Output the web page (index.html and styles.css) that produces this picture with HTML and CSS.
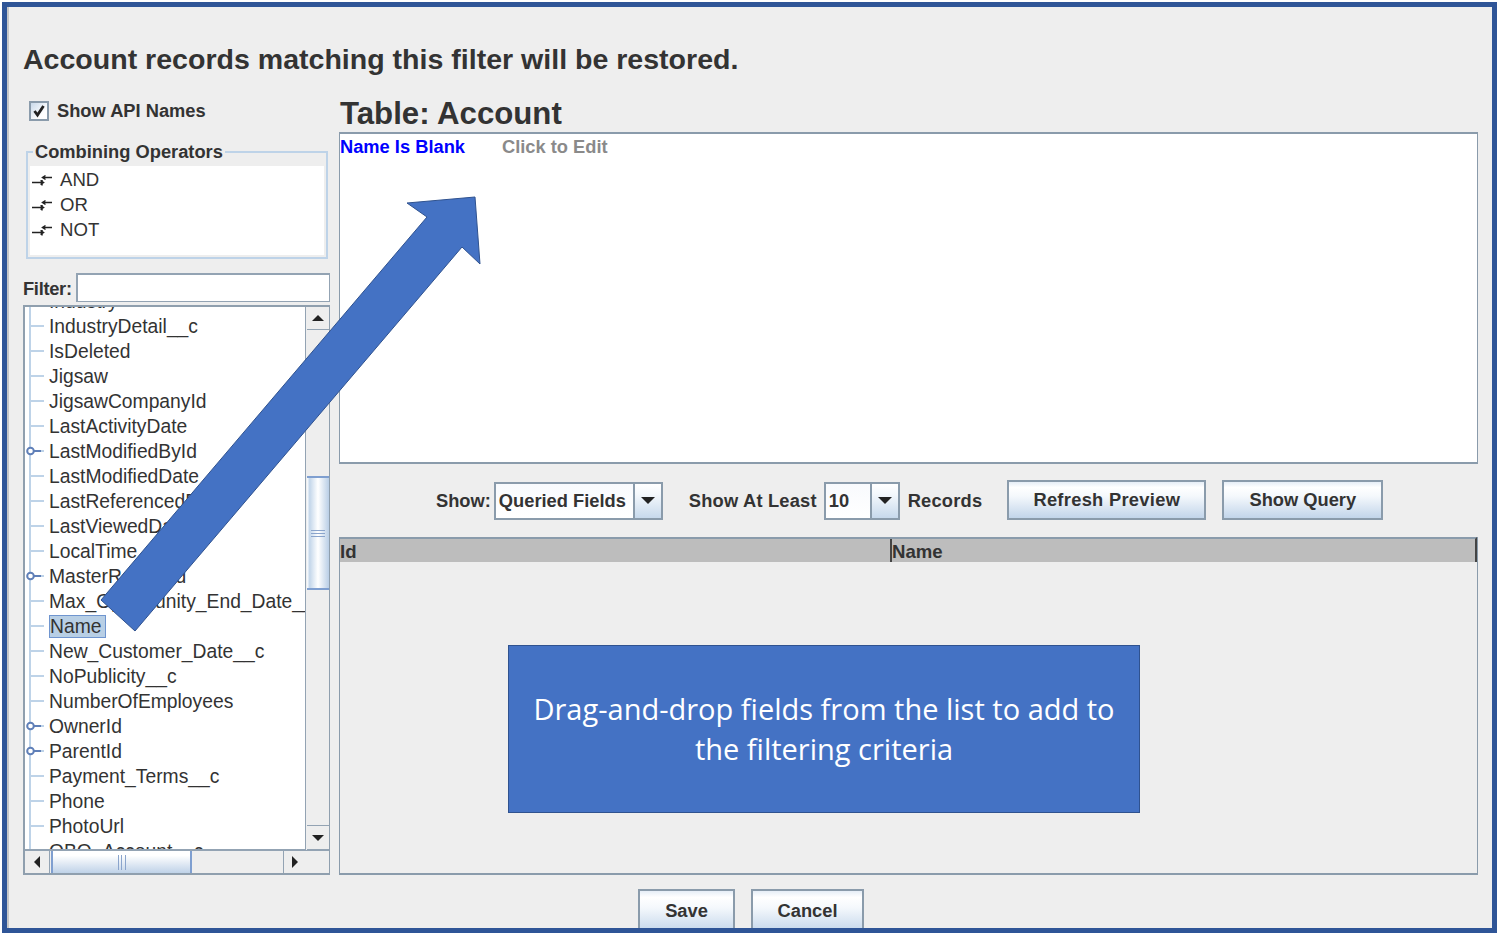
FILE: index.html
```html
<!DOCTYPE html>
<html lang="en">
<head>
<meta charset="utf-8">
<title>Account filter</title>
<link rel="stylesheet" href="styles.css">
</head>
<body>
<div class="frame">
  <div class="inner">
    <h1 class="heading">Account records matching this filter will be restored.</h1>
    <div class="columns">
      <div class="left">
        <label class="check-row"><span class="checkbox"><svg width="16" height="16" viewBox="0 0 16 16"><path d="M3.5 8 L6.5 12 L12.5 3" fill="none" stroke="#222" stroke-width="2.8"/></svg></span><span class="bold-label">Show API Names</span></label>
        <div class="group">
          <span class="legend">Combining Operators</span>
          <div class="ops">
            <div class="op"><svg class="op-icon" width="20" height="14" viewBox="0 0 20 14"><path d="M0 9.5H11M8.5 7.5L11.5 9.5L8.5 11.5M10 7V12.5M20 4.5H11M13.5 2.5L10.5 4.5L13.5 6.5" fill="none" stroke="#222" stroke-width="1.5"/></svg>AND</div>
            <div class="op"><svg class="op-icon" width="20" height="14" viewBox="0 0 20 14"><path d="M0 9.5H11M8.5 7.5L11.5 9.5L8.5 11.5M10 7V12.5M20 4.5H11M13.5 2.5L10.5 4.5L13.5 6.5" fill="none" stroke="#222" stroke-width="1.5"/></svg>OR</div>
            <div class="op"><svg class="op-icon" width="20" height="14" viewBox="0 0 20 14"><path d="M0 9.5H11M8.5 7.5L11.5 9.5L8.5 11.5M10 7V12.5M20 4.5H11M13.5 2.5L10.5 4.5L13.5 6.5" fill="none" stroke="#222" stroke-width="1.5"/></svg>NOT</div>
          </div>
        </div>
        <div class="filter-row"><span class="bold-label filter-label">Filter:</span><div class="filter-input"></div></div>
        <div class="tree">
          <div class="list">
            <div class="rows">
              <div class="row">Industry</div>
              <div class="row">IndustryDetail__c</div>
              <div class="row">IsDeleted</div>
              <div class="row">Jigsaw</div>
              <div class="row">JigsawCompanyId</div>
              <div class="row">LastActivityDate</div>
              <div class="row key"><svg class="key-icon" width="24" height="12" viewBox="0 0 24 12"><circle cx="5.5" cy="5" r="3.3" fill="#fff" stroke="#5f7fb8" stroke-width="2"/><path d="M9 5H16" stroke="#5f7fb8" stroke-width="2"/></svg>LastModifiedById</div>
              <div class="row">LastModifiedDate</div>
              <div class="row">LastReferencedDate</div>
              <div class="row">LastViewedDate</div>
              <div class="row">LocalTime__c</div>
              <div class="row key"><svg class="key-icon" width="24" height="12" viewBox="0 0 24 12"><circle cx="5.5" cy="5" r="3.3" fill="#fff" stroke="#5f7fb8" stroke-width="2"/><path d="M9 5H16" stroke="#5f7fb8" stroke-width="2"/></svg>MasterRecordId</div>
              <div class="row">Max_Opportunity_End_Date__c</div>
              <div class="row"><span class="selected">Name</span></div>
              <div class="row">New_Customer_Date__c</div>
              <div class="row">NoPublicity__c</div>
              <div class="row">NumberOfEmployees</div>
              <div class="row key"><svg class="key-icon" width="24" height="12" viewBox="0 0 24 12"><circle cx="5.5" cy="5" r="3.3" fill="#fff" stroke="#5f7fb8" stroke-width="2"/><path d="M9 5H16" stroke="#5f7fb8" stroke-width="2"/></svg>OwnerId</div>
              <div class="row key"><svg class="key-icon" width="24" height="12" viewBox="0 0 24 12"><circle cx="5.5" cy="5" r="3.3" fill="#fff" stroke="#5f7fb8" stroke-width="2"/><path d="M9 5H16" stroke="#5f7fb8" stroke-width="2"/></svg>ParentId</div>
              <div class="row">Payment_Terms__c</div>
              <div class="row">Phone</div>
              <div class="row">PhotoUrl</div>
              <div class="row">QBO_Account__c</div>
            </div>
          </div>
          <div class="vscroll">
            <div class="sb-btn sb-v-btn"><i class="tri tri-up"></i></div>
            <div class="v-track"><div class="v-thumb"><i class="grip-v"></i></div></div>
            <div class="sb-btn sb-v-btn"><i class="tri tri-down"></i></div>
          </div>
          <div class="hscroll">
            <div class="sb-btn sb-h-btn"><i class="tri tri-left"></i></div>
            <div class="h-track"><div class="h-thumb"><i class="grip-h"></i></div></div>
            <div class="sb-btn sb-h-btn"><i class="tri tri-right"></i></div>
          </div>
          <div class="corner"></div>
        </div>
      </div>
      <div class="right">
        <h2 class="table-title">Table: Account</h2>
        <div class="editor"><span class="criteria">Name Is Blank</span><span class="edit-link">Click to Edit</span></div>
        <div class="toolbar">
          <span class="bold-label">Show:</span>
          <div class="combo combo-fields"><span class="combo-value">Queried Fields</span><span class="combo-btn"><i class="tri tri-down"></i></span></div>
          <span class="bold-label at-least">Show At Least</span>
          <div class="combo combo-count"><span class="combo-value">10</span><span class="combo-btn"><i class="tri tri-down"></i></span></div>
          <span class="bold-label records">Records</span>
          <div class="btn btn-refresh">Refresh Preview</div>
          <div class="btn btn-query">Show Query</div>
        </div>
        <div class="results">
          <div class="results-head"><div class="col col-id">Id</div><div class="col col-name">Name</div></div>
        </div>
      </div>
    </div>
    <div class="footer">
      <div class="btn btn-save">Save</div>
      <div class="btn btn-cancel">Cancel</div>
    </div>
  </div>
</div>
<svg class="arrow" width="1498" height="935" viewBox="0 0 1498 935"><polygon points="475,197 480,264 462,247 135,631 101,600 427,217 407,203" fill="#4472c4" stroke="#2f528f" stroke-width="1"/></svg>
<div class="callout">Drag-and-drop fields from the list to add to the filtering criteria</div>
</body>
</html>
```
FILE: styles.css
```css
* { box-sizing: border-box; }
html, body { margin: 0; padding: 0; }
body {
  position: relative;
  width: 1498px;
  height: 935px;
  overflow: hidden;
  background: #fff;
  font-family: "Liberation Sans", Arial, sans-serif;
  color: #333;
}
.frame {
  margin: 2px 0 0 2px;
  width: 1495px;
  height: 931px;
  border: 5px solid #2f5597;
  background: #eee;
}
.inner {
  height: 100%;
  display: flex;
  flex-direction: column;
  overflow: hidden;
  border-left: 2px solid #c6c6c6;
  padding-left: 14px;
}
.heading {
  margin: 36px 0 0;
  height: 32px;
  font-size: 28.55px;
  line-height: 32px;
  font-weight: 700;
  white-space: nowrap;
}
.columns { display: flex; margin-top: 22px; height: 778px; flex: none; }
.left { width: 307px; flex: none; display: flex; flex-direction: column; }
.right { width: 1139px; flex: none; margin-left: 9px; display: flex; flex-direction: column; }
.bold-label { font-size: 18.3px; font-weight: 700; white-space: nowrap; }
.check-row { height: 28px; display: flex; align-items: center; padding-left: 6px; flex: none; }
.checkbox {
  width: 20px; height: 20px; margin-right: 8px;
  border: 2px solid #8a9bab;
  background: linear-gradient(135deg, #c9d9ea, #fff 70%);
  display: flex; align-items: center; justify-content: center;
}
.group {
  position: relative;
  flex: none;
  margin: 26px 0 0 3px;
  width: 302px; height: 108px;
  border: 2px solid #bed3e8;
  padding: 13px 2px 2px;
}
.legend {
  position: absolute; left: 5px; top: -12px;
  padding: 0 2px;
  background: #eee;
  font-size: 18.3px; font-weight: 700; line-height: 22px; white-space: nowrap;
}
.ops { height: 89px; background: #fff; padding-top: 1px; }
.op { height: 25px; display: flex; align-items: center; padding-left: 2px; font-size: 18.6px; }
.op-icon { margin-right: 8px; flex: none; }
.filter-row { display: flex; margin-top: 14px; height: 29px; flex: none; }
.filter-label { width: 53px; line-height: 31px; letter-spacing: -0.3px; }
.filter-input { flex: 1; background: #fff; border: 2px solid #93a3b3; border-right-width: 1px; border-bottom-width: 1px; }
.tree {
  margin-top: 3px; height: 570px; flex: none;
  display: grid;
  grid-template-columns: 281px 23px;
  grid-template-rows: 543px 23px;
  border: 2px solid #8f9fae;
  border-right-width: 1px;
}
.list {
  overflow: hidden; background: #fff;
  border-right: 1px solid #93a3b3;
  border-bottom: 1px solid #93a3b3;
}
.rows { margin-top: -18px; }
.row {
  height: 25px; padding-left: 24px;
  display: flex; align-items: center;
  font-size: 19.3px; white-space: nowrap;
  background:
    linear-gradient(#bed3e8, #bed3e8) 4px 0 / 2px 100% no-repeat,
    linear-gradient(#bed3e8, #bed3e8) 4px 11px / 15px 2px no-repeat;
}
.row.key { padding-left: 0; }
.key-icon { flex: none; }
.selected {
  display: block;
  height: 23px; line-height: 21px;
  width: 57px;
  background: #b8cfe5;
  border: 1px solid #6f95cf;
}
.vscroll { display: flex; flex-direction: column; padding-left: 1px; }
.sb-btn { background: #eee; display: flex; align-items: center; justify-content: center; flex: none; }
.sb-v-btn { height: 23px; }
.sb-v-btn:first-child { border-bottom: 1px solid #93a3b3; }
.sb-v-btn:last-child { border-top: 1px solid #93a3b3; border-bottom: 1px solid #93a3b3; height: 25px; }
.sb-h-btn { width: 24px; }
.sb-h-btn:last-child { width: 23px; border-left: 1px solid #93a3b3; }
.v-track { flex: 1; background: #eee; }
.v-thumb {
  margin-top: 146px; height: 114px;
  background: linear-gradient(90deg, #fff, #c3d6ea 12%, #fff 50%, #b9cee6);
  border-top: 2px solid #7f9fd0;
  border-bottom: 2px solid #7f9fd0;
  display: flex; align-items: center; justify-content: center;
}
.grip-v { width: 14px; height: 7px; border-top: 1px solid #8aa4cc; border-bottom: 1px solid #8aa4cc; background: linear-gradient(#8aa4cc, #8aa4cc) 0 2px / 100% 1px no-repeat; }
.hscroll { display: flex; border-top: 1px solid #93a3b3; }
.h-track { flex: 1; background: #eee; border-left: 1px solid #93a3b3; padding-left: 1px; }
.h-thumb {
  width: 141px; height: 100%;
  background: linear-gradient(#fff, #fff 20%, #bfd2e8);
  border: 2px solid #7f9fd0;
  border-width: 0 2px;
  display: flex; align-items: center; justify-content: center;
}
.grip-h { width: 8px; height: 15px; border-left: 1px solid #8aa4cc; border-right: 1px solid #8aa4cc; background: linear-gradient(#8aa4cc, #8aa4cc) 2.5px 0 / 1px 100% no-repeat; }
.corner { background: #eee; border-top: 1px solid #93a3b3; }
.tri { display: block; width: 0; height: 0; border-style: solid; }
.tri-up { border-width: 0 6px 6px; border-color: transparent transparent #222; }
.tri-down { border-width: 6px 6px 0; border-color: #222 transparent transparent; }
.tri-left { border-width: 6px 6px 6px 0; border-color: transparent #222 transparent transparent; }
.tri-right { border-width: 6px 0 6px 6px; border-color: transparent transparent transparent #222; }
.table-title { margin: 0; height: 35px; font-size: 31.2px; line-height: 32px; font-weight: 700; padding-left: 1px; padding-top: 1px; white-space: nowrap; flex: none; }
.editor {
  height: 332px; flex: none;
  background: #fff;
  border: 1px solid #8a9bab;
  border-width: 2px 1px 2px 1px;
  font-size: 18.3px; font-weight: 700; line-height: 25px;
}
.criteria { color: #0000ff; display: inline-block; width: 162px; }
.edit-link { color: #8a8a8a; }
.toolbar { height: 73px; flex: none; display: flex; align-items: center; padding-left: 97px; }
.combo {
  display: flex; height: 38px; margin-left: 3px;
  border: 2px solid #8a9bab;
  background: linear-gradient(#f8fafd, #fff);
}
.combo-fields { width: 169px; }
.combo-count { width: 76px; margin-left: 7px; }
.combo-value { flex: 1; padding-left: 3px; font-size: 18.3px; font-weight: 700; line-height: 34px; white-space: nowrap; }
.combo-btn {
  width: 28px; flex: none;
  border-left: 2px solid #8a9bab;
  background: linear-gradient(#fff, #f4f8fc 30%, #c7d9ec);
  display: flex; align-items: center; justify-content: center;
}
.combo-btn .tri { border-width: 7px 7px 0; }
.at-least { margin-left: 26px; letter-spacing: 0.2px; }
.records { margin-left: 8px; letter-spacing: 0.2px; }
.btn {
  height: 40px; flex: none;
  border: 2px solid #8a9bab;
  background: linear-gradient(#e6eef7, #fff 15%, #f4f8fc 40%, #c2d5ea);
  display: flex; align-items: center; justify-content: center;
  font-size: 18.3px; font-weight: 700; white-space: nowrap;
}
.btn-refresh { width: 199px; margin-left: 25px; margin-bottom: 2px; letter-spacing: 0.3px; }
.btn-query { width: 161px; margin-left: 16px; margin-bottom: 2px; }
.results {
  flex: 1;
  border: 1px solid #8a9bab;
  border-width: 0 1px 2px 1px;
}
.results-head {
  height: 25px; display: flex;
  background: #bdbdbd;
  border-top: 2px solid #8a9bab;
  border-right: 2px solid #444;
}
.col { font-size: 18.6px; font-weight: 700; line-height: 25px; white-space: nowrap; }
.col-id { width: 550px; }
.col-name { flex: 1; border-left: 2px solid #444; }
.footer { display: flex; margin-top: 14px; padding-left: 615px; flex: none; }
.btn-save { width: 97px; height: 46px; padding-bottom: 3px; }
.btn-cancel { width: 113px; height: 46px; margin-left: 16px; padding-bottom: 3px; }
.arrow { position: absolute; left: 0; top: 0; pointer-events: none; }
.callout {
  position: absolute; left: 508px; top: 645px;
  width: 632px; height: 168px;
  padding: 0 20px;
  background: #4472c4;
  border: 1.5px solid #2f528f;
  color: #fff;
  font-family: "Open Sans", "Noto Sans", sans-serif;
  font-size: 29px; line-height: 40px;
  text-align: center;
  display: flex; align-items: center; justify-content: center;
}
```
